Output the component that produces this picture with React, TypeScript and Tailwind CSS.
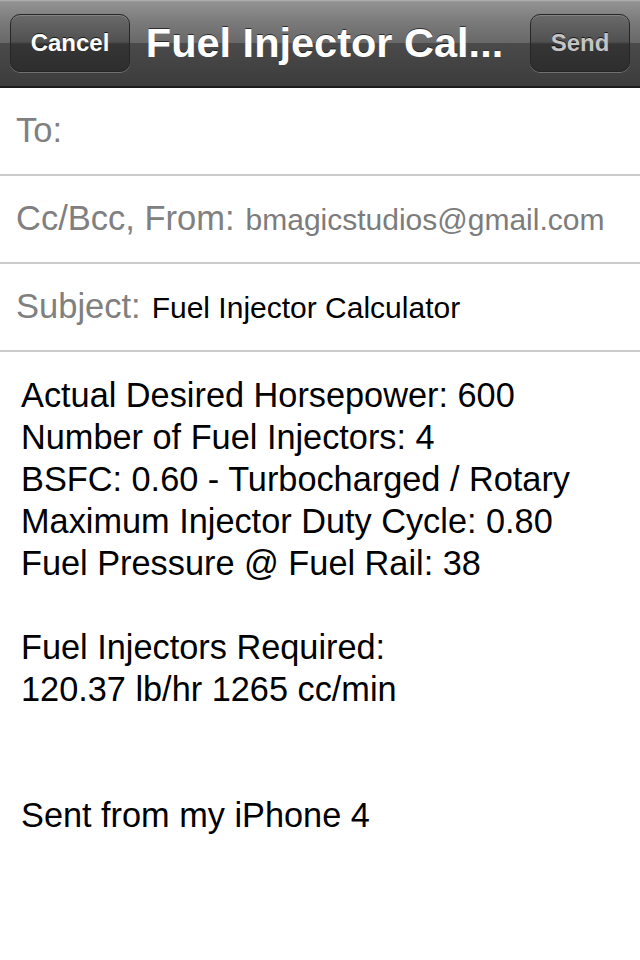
import React from "react";

const font = { fontFamily: '"Liberation Sans", Arial, Helvetica, sans-serif' };

function NavButton({ label, muted }: { label: string; muted?: boolean }) {
  return (
    <div
      className={`h-[58px] flex items-center justify-center rounded-[10px] border border-[#262626] bg-[linear-gradient(to_bottom,#6a6a6a_0%,#505050_48%,#353535_52%,#2e2e2e_100%)] shadow-[inset_0_1px_0_rgba(255,255,255,0.18),0_1px_0_rgba(255,255,255,0.25)] text-[24px] font-bold [text-shadow:0_-1px_0_rgba(0,0,0,0.7)] ${
        muted ? "w-[100px] text-[#c4c4c4]" : "w-[120px] text-white"
      }`}
    >
      {label}
    </div>
  );
}

function Row({ label, value, dark }: { label: string; value?: string; dark?: boolean }) {
  return (
    <div className="h-[88px] flex items-center pl-[16px] border-b-2 border-[#cbcbcb] whitespace-nowrap">
      <span className="text-[34.5px] text-[#808080]">{label}</span>
      {value && (
        <span className={`ml-[11px] text-[30px] ${dark ? "text-black" : "text-[#7c7c7c]"}`}>{value}</span>
      )}
    </div>
  );
}

export default function App() {
  const lines = [
    "Actual Desired Horsepower: 600",
    "Number of Fuel Injectors: 4",
    "BSFC: 0.60 - Turbocharged / Rotary",
    "Maximum Injector Duty Cycle: 0.80",
    "Fuel Pressure @ Fuel Rail: 38",
    "",
    "Fuel Injectors Required:",
    "120.37 lb/hr 1265 cc/min",
    "",
    "",
    "Sent from my iPhone 4",
  ];
  return (
    <div className="w-[640px] h-[960px] bg-white overflow-hidden" style={font}>
      <div className="h-[88px] border-b-2 border-[#1c1c1c] bg-[linear-gradient(to_bottom,#b4b4b4_0px,#929292_2px,#7a7a7a_22px,#686868_43px,#4a4a4a_43px,#3c3c3c_86px)] flex items-center pl-[10px] pr-[10px]">
        <NavButton label="Cancel" />
        <div className="flex-1 text-center text-white font-bold text-[41.5px] whitespace-nowrap pr-[11px] [text-shadow:0_-1px_0_rgba(0,0,0,0.6)]">
          Fuel Injector Cal...
        </div>
        <NavButton label="Send" muted />
      </div>
      <Row label="To:" />
      <Row label="Cc/Bcc, From:" value="bmagicstudios@gmail.com" />
      <Row label="Subject:" value="Fuel Injector Calculator" dark />
      <div className="pl-[21px] pt-[22px] text-[34.3px] leading-[42px] text-black whitespace-nowrap">
        {lines.map((l, i) => (
          <div key={i} className="h-[42px]">
            {l}
          </div>
        ))}
      </div>
    </div>
  );
}
